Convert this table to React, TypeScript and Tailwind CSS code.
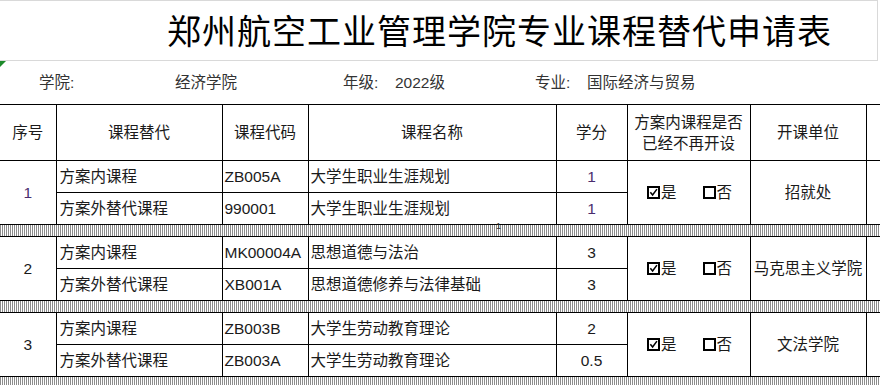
import React from 'react';

const font = "font-['Liberation_Sans','Noto_Sans_CJK_SC',sans-serif]";

type Row = { kind: string; code: string; name: string; credit: string };
type Group = { no: string; rows: Row[]; unit: string; purple?: boolean };

const groups: Group[] = [
  {
    no: '1',
    purple: true,
    unit: '招就处',
    rows: [
      { kind: '方案内课程', code: 'ZB005A', name: '大学生职业生涯规划', credit: '1' },
      { kind: '方案外替代课程', code: '990001', name: '大学生职业生涯规划', credit: '1' },
    ],
  },
  {
    no: '2',
    unit: '马克思主义学院',
    rows: [
      { kind: '方案内课程', code: 'MK00004A', name: '思想道德与法治', credit: '3' },
      { kind: '方案外替代课程', code: 'XB001A', name: '思想道德修养与法律基础', credit: '3' },
    ],
  },
  {
    no: '3',
    unit: '文法学院',
    rows: [
      { kind: '方案内课程', code: 'ZB003B', name: '大学生劳动教育理论', credit: '2' },
      { kind: '方案外替代课程', code: 'ZB003A', name: '大学生劳动教育理论', credit: '0.5' },
    ],
  },
];

function YesNo() {
  return (
    <div className="flex items-center justify-center gap-[26px] pl-[2px]">
      <span className="flex items-center">
        <span className="relative mr-[1px] inline-block h-[13px] w-[13px] border-2 border-black">
          <svg viewBox="0 0 10 10" className="absolute left-0 top-0 h-[9px] w-[9px]">
            <path d="M1.5 4.8 L4 7.8 L8.8 1.2" fill="none" stroke="black" strokeWidth="1.7" />
          </svg>
        </span>
        是
      </span>
      <span className="flex items-center">
        <span className="mr-[1px] inline-block h-[13px] w-[13px] border-[2.5px] border-black" />
        否
      </span>
    </div>
  );
}

function Band({ mark }: { mark?: boolean }) {
  return (
    <tr className="h-[12px]">
      <td
        colSpan={8}
        className="relative border-y border-black p-0 bg-[linear-gradient(90deg,transparent_1px,#fff_1px),linear-gradient(#1a1a1a_1px,#fff_1px)] bg-[length:2px_2px]"
      >
        {mark && (
          <span className="absolute left-[496px] top-[-3px] text-[9px] leading-none text-[#333]">1</span>
        )}
      </td>
    </tr>
  );
}

export default function App() {
  const cell = 'border border-black p-0';
  return (
    <div className={`h-[385px] w-[880px] overflow-hidden bg-white text-[#1a1a1a] ${font}`}>
      {/* title */}
      <div className="flex h-[61px] items-center overflow-hidden border-y border-r border-[#d9d9d9] pl-[167px] w-[878px]">
        <h1 className="shrink-0 whitespace-nowrap pt-[3px] text-[34px] leading-none tracking-[1px] text-black">
          郑州航空工业管理学院专业课程替代申请表
        </h1>
      </div>

      {/* info */}
      <div className="relative flex h-[43px] items-center whitespace-nowrap pl-[39px] text-[15.5px] text-[#333]">
        <span className="absolute left-0 top-0 h-0 w-0 border-r-[6px] border-t-[6px] border-r-transparent border-t-[#1d8a2a]" />
        <span className="w-[136px] shrink-0">学院:</span>
        <span className="w-[168px] shrink-0">经济学院</span>
        <span className="w-[52px] shrink-0">年级:</span>
        <span className="w-[140px] shrink-0">2022级</span>
        <span className="w-[52px] shrink-0">专业:</span>
        <span className="shrink-0">国际经济与贸易</span>
      </div>

      <table className="w-[880px] table-fixed border-collapse text-[15.5px]">
        <colgroup>
          <col className="w-[56px]" />
          <col className="w-[166px]" />
          <col className="w-[86px]" />
          <col className="w-[248px]" />
          <col className="w-[71px]" />
          <col className="w-[123px]" />
          <col className="w-[116px]" />
          <col className="w-[14px]" />
        </colgroup>
        <thead>
          <tr className="h-[56px] text-center">
            <th className={`${cell} border-l-0 font-normal`}>序号</th>
            <th className={`${cell} font-normal`}>课程替代</th>
            <th className={`${cell} font-normal`}>课程代码</th>
            <th className={`${cell} font-normal`}>课程名称</th>
            <th className={`${cell} font-normal`}>学分</th>
            <th className={`${cell} font-normal leading-[21px]`}>
              方案内课程是否
              <br />
              已经不再开设
            </th>
            <th className={`${cell} font-normal`}>开课单位</th>
            <th className={`${cell} border-r-0`} />
          </tr>
        </thead>
        <tbody>
          {groups.map((g, gi) => (
            <React.Fragment key={g.no}>
              {g.rows.map((r, ri) => (
                <tr key={r.code} className="h-[32px]">
                  {ri === 0 && (
                    <td
                      rowSpan={2}
                      className={`${cell} border-l-0 text-center ${g.purple ? 'text-[#4a2d6e]' : ''}`}
                    >
                      {g.no}
                    </td>
                  )}
                  <td className={`${cell} pl-[3px]`}>{r.kind}</td>
                  <td className={`${cell} pl-[2px]`}>{r.code}</td>
                  <td className={`${cell} pl-[2px]`}>{r.name}</td>
                  <td className={`${cell} text-center ${g.purple ? 'text-[#4a2d6e]' : ''}`}>{r.credit}</td>
                  {ri === 0 && (
                    <>
                      <td rowSpan={2} className={cell}>
                        <YesNo />
                      </td>
                      <td rowSpan={2} className={`${cell} text-center`}>
                        {g.unit}
                      </td>
                      <td rowSpan={2} className={`${cell} border-r-0`} />
                    </>
                  )}
                </tr>
              ))}
              <Band mark={gi === 0} />
            </React.Fragment>
          ))}
        </tbody>
      </table>
    </div>
  );
}
